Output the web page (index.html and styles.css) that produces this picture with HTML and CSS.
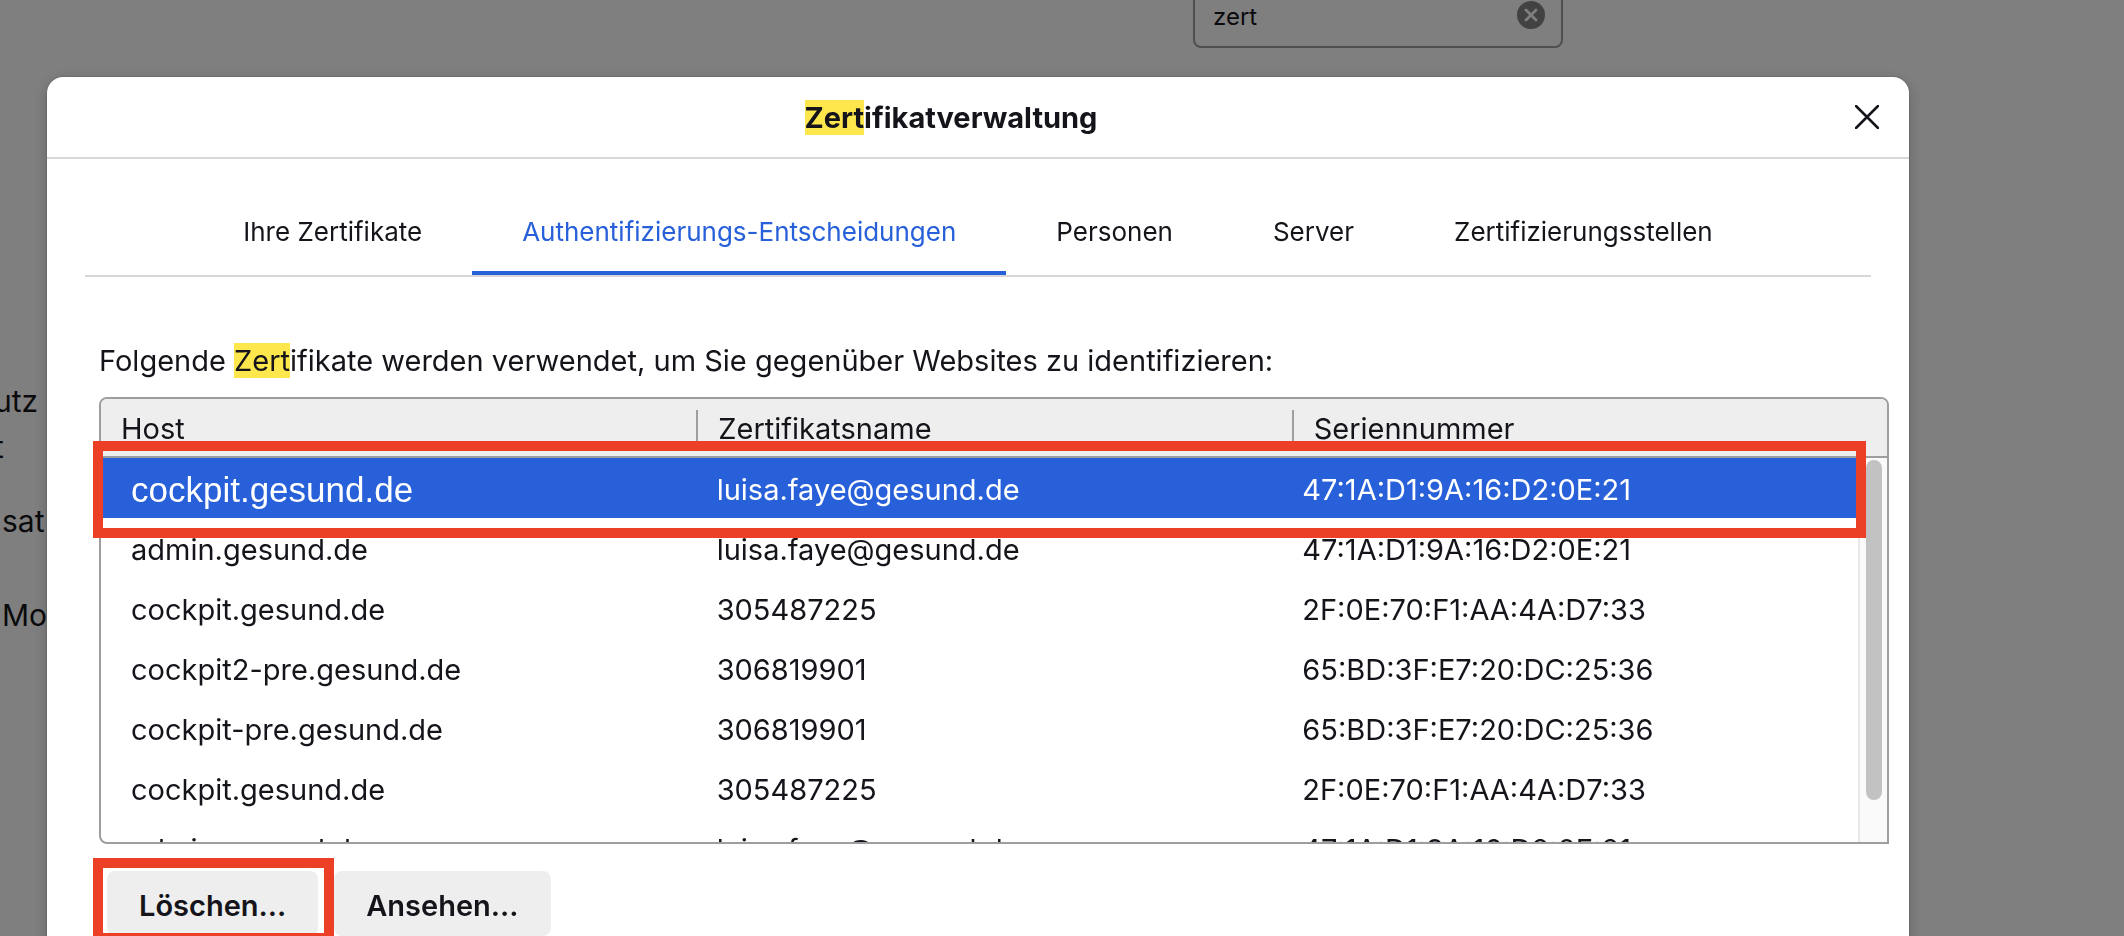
FILE: index.html
```html
<!DOCTYPE html>
<html lang="de">
<head>
  <meta charset="utf-8">
  <meta name="viewport" content="width=device-width, initial-scale=1">
  <title>Zertifikatverwaltung</title>
  <link rel="stylesheet" href="styles.css">
</head>
<body>
  <div class="page">
    <form class="search" role="search">
      <input type="text" class="search-input" id="search" aria-label="In Einstellungen suchen" value="zert">
      <button type="button" class="search-clear" aria-label="Leeren">
        <svg viewBox="0 0 28 28" width="28" height="28">
          <circle cx="14" cy="14" r="14" fill="#848484"/>
          <path d="M9 9l10 10M19 9l-10 10" stroke="#fff" stroke-width="2.8" stroke-linecap="round"/>
        </svg>
      </button>
    </form>
    <nav class="categories">
      <a href="#privacy" class="category clipped">utz<br>t</a>
      <a href="#sync" class="category">sat</a>
      <a href="#more" class="category category-last">Mo</a>
    </nav>
  </div>

  <div class="overlay">
    <div class="dialog" role="dialog" aria-labelledby="dialogTitle">
      <div class="dialog-header">
        <h1 id="dialogTitle"><mark>Zert</mark>ifikatverwaltung</h1>
        <button type="button" class="close-btn" aria-label="Schließen">
          <svg viewBox="0 0 24 24" width="24" height="24">
            <path d="M1 1l22 22M23 1L1 23" fill="none" stroke="#15141a" stroke-width="2.5" stroke-linecap="round"/>
          </svg>
        </button>
      </div>

      <div class="tabs" role="tablist">
        <button type="button" class="tab" role="tab">Ihre Zertifikate</button>
        <button type="button" class="tab active" role="tab" aria-selected="true">Authentifizierungs-Entscheidungen</button>
        <button type="button" class="tab" role="tab">Personen</button>
        <button type="button" class="tab" role="tab">Server</button>
        <button type="button" class="tab" role="tab">Zertifizierungsstellen</button>
      </div>

      <div class="panel">
        <p class="description">Folgende <mark>Zert</mark>ifikate werden verwendet, um Sie gegenüber Websites zu identifizieren:</p>

        <div class="tree">
          <table class="cert-table">
            <thead>
              <tr><th>Host</th><th>Zertifikatsname</th><th>Seriennummer</th></tr>
            </thead>
            <tbody>
              <tr class="selected"><td class="host-large">cockpit.gesund.de</td><td>luisa.faye@gesund.de</td><td>47:1A:D1:9A:16:D2:0E:21</td></tr>
              <tr><td>admin.gesund.de</td><td>luisa.faye@gesund.de</td><td>47:1A:D1:9A:16:D2:0E:21</td></tr>
              <tr><td>cockpit.gesund.de</td><td>305487225</td><td>2F:0E:70:F1:AA:4A:D7:33</td></tr>
              <tr><td>cockpit2-pre.gesund.de</td><td>306819901</td><td>65:BD:3F:E7:20:DC:25:36</td></tr>
              <tr><td>cockpit-pre.gesund.de</td><td>306819901</td><td>65:BD:3F:E7:20:DC:25:36</td></tr>
              <tr><td>cockpit.gesund.de</td><td>305487225</td><td>2F:0E:70:F1:AA:4A:D7:33</td></tr>
              <tr><td>admin.gesund.de</td><td>luisa.faye@gesund.de</td><td>47:1A:D1:9A:16:D2:0E:21</td></tr>
            </tbody>
          </table>
          <div class="scrollbar"><div class="scrollbar-thumb"></div></div>
          <div class="marker marker-row"></div>
        </div>

        <div class="actions">
          <div class="action">
            <button type="button" class="btn">Löschen...</button>
            <div class="marker marker-button"></div>
          </div>
          <button type="button" class="btn">Ansehen...</button>
        </div>
      </div>
    </div>
  </div>
</body>
</html>
```
FILE: styles.css
```css
* {
  box-sizing: border-box;
}

body {
  margin: 0;
  height: 100vh;
  overflow: hidden;
  background: #fff;
  color: #15141a;
  font-family: Inter, "Liberation Sans", sans-serif;
  font-size: 29px;
  line-height: 37px;
}

button,
input {
  font-family: inherit;
  color: inherit;
}

mark {
  background: #fde74c;
  color: inherit;
}

/* Settings page behind the dialog */
.search {
  display: flex;
  align-items: center;
  width: 370px;
  height: 64px;
  margin: -16px 561px 0 auto;
  padding: 0 16px 0 18px;
  border: 2px solid #9e9e9e;
  border-radius: 8px;
}

.search-input {
  flex: 1;
  min-width: 0;
  padding: 0;
  border: none;
  outline: none;
  background: none;
  font-size: 24px;
}

.search-clear {
  display: flex;
  padding: 0 0 2px;
  border: none;
  background: none;
}

.categories {
  display: flex;
  flex-direction: column;
  align-items: flex-start;
  padding: 330px 0 0 2px;
}

.category {
  color: inherit;
  font-size: 30px;
  line-height: 46px;
  text-decoration: none;
  margin-bottom: 28px;
}

.category.clipped {
  margin-left: -8px;
}

.category-last {
  margin-top: 20px;
}

/* Dialog */
.overlay {
  position: fixed;
  inset: 0;
  overflow: hidden;
  padding: 77px 215px 0 47px;
  background: rgba(0, 0, 0, 0.5);
}

.dialog {
  min-height: 100vh;
  background: #fff;
  border-radius: 16px 16px 0 0;
  box-shadow: 0 4px 16px rgba(0, 0, 0, 0.2), 0 0 2px rgba(0, 0, 0, 0.3);
}

.dialog-header {
  display: flex;
  align-items: center;
  height: 82px;
  padding-right: 30px;
  border-bottom: 2px solid #d7d7db;
}

.dialog-header h1 {
  flex: 1;
  margin: 0;
  font-size: 29px;
  font-weight: 700;
  text-align: center;
}

.close-btn {
  display: flex;
  padding: 0;
  border: none;
  background: none;
}

.tabs {
  display: flex;
  justify-content: center;
  margin: 28px 38px 0;
  border-bottom: 2px solid #d7d7db;
}

.tab {
  height: 88px;
  padding: 4px 50px 0;
  border: none;
  border-bottom: 4px solid transparent;
  background: none;
  font-size: 26px;
  white-space: nowrap;
}

.tab.active {
  color: #2760d9;
  border-bottom-color: #2760d9;
}

.panel {
  padding: 65px 20px 0 52px;
}

.description {
  margin: 0 0 18px;
}

.tree {
  position: relative;
  border: 2px solid #9e9e9e;
  border-radius: 8px 8px 0 8px;
}

.cert-table {
  display: block;
  overflow: hidden;
  border-radius: 6px 6px 0 6px;
}

.cert-table thead {
  display: block;
  padding: 11px 0 9px;
  background: #eee;
  border-bottom: 2px solid #9e9e9e;
}

.cert-table tr {
  display: table;
  width: 100%;
  table-layout: fixed;
  border-spacing: 0;
}

.cert-table th {
  padding: 0 20px;
  font-weight: 400;
  text-align: left;
}

.cert-table th + th {
  border-left: 2px solid #9e9e9e;
}

.cert-table tbody {
  display: block;
  height: 384px;
  padding-right: 29px;
  overflow: hidden;
}

.cert-table td {
  height: 60px;
  padding: 2px 30px 0;
}

.cert-table .selected {
  background: #2760d9;
  color: #fff;
}

.cert-table .host-large {
  font-family: "Liberation Sans", Arial, sans-serif;
  font-size: 35px;
}

.scrollbar {
  position: absolute;
  top: 59px;
  right: 0;
  bottom: 0;
  width: 29px;
  padding: 2px 5px 0 6px;
  background: #fafafa;
  border-left: 2px solid #e8e8e8;
}

.scrollbar-thumb {
  height: 340px;
  border-radius: 8px;
  background: #c2c2c2;
}

/* Red callout frames */
.marker {
  position: absolute;
  border: 10px solid #eb4026;
  pointer-events: none;
}

.marker-row {
  top: 42px;
  left: -8px;
  right: 21px;
  height: 97px;
}

.marker-button {
  inset: -13px -16px -7px -14px;
}

.actions {
  display: flex;
  gap: 16px;
  padding: 27px 8px 0;
}

.action {
  position: relative;
}

.btn {
  height: 65px;
  padding: 4px 32px 0;
  border: none;
  border-radius: 8px;
  background: #eee;
  font-size: 29px;
  font-weight: 600;
}
```
